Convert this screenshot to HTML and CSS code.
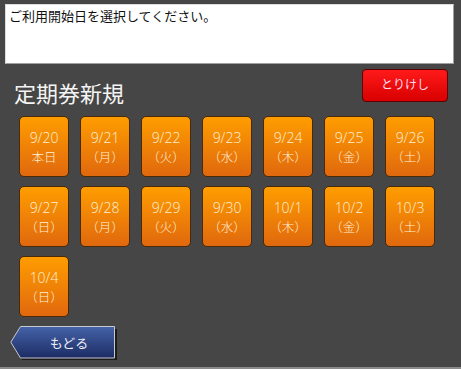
FILE: index.html
```html
<!DOCTYPE html>
<html lang="ja">
<head>
  <meta charset="UTF-8" />
  <title>定期券新規</title>
  <link rel="stylesheet" href="styles.css">
</head>
<body>
  <div id="gamen">
    <div id="message">ご利用開始日を選択してください。</div>

    <div id="header">
      <div class="midashi">定期券新規</div>
      <button class="torikeshi">とりけし</button>
    </div>

    <div id="hiduke">
      <button class="hi"><span>9/20</span><span>本日</span></button>
      <button class="hi"><span>9/21</span><span>（月）</span></button>
      <button class="hi"><span>9/22</span><span>（火）</span></button>
      <button class="hi"><span>9/23</span><span>（水）</span></button>
      <button class="hi"><span>9/24</span><span>（木）</span></button>
      <button class="hi"><span>9/25</span><span>（金）</span></button>
      <button class="hi"><span>9/26</span><span>（土）</span></button>
      <button class="hi"><span>9/27</span><span>（日）</span></button>
      <button class="hi"><span>9/28</span><span>（月）</span></button>
      <button class="hi"><span>9/29</span><span>（火）</span></button>
      <button class="hi"><span>9/30</span><span>（水）</span></button>
      <button class="hi"><span>10/1</span><span>（木）</span></button>
      <button class="hi"><span>10/2</span><span>（金）</span></button>
      <button class="hi"><span>10/3</span><span>（土）</span></button>
      <button class="hi"><span>10/4</span><span>（日）</span></button>
    </div>

    <button class="modoru">
      <svg class="modoru-bg" width="108" height="36" viewBox="0 0 108 36">
        <defs>
          <linearGradient id="ao" x1="0" y1="0" x2="0" y2="1">
            <stop offset="0" stop-color="#4563a8" />
            <stop offset="1" stop-color="#1c2c64" />
          </linearGradient>
        </defs>
        <polygon points="12,3 107,3 107,34 12,34 2,18.5" fill="#111" opacity="0.8" />
        <polygon points="10.5,0.5 104.5,0.5 104.5,32 10.5,32 0.8,16.2" fill="url(#ao)" stroke="#c8c8d0" stroke-width="1" />
      </svg>
      <span>もどる</span>
    </button>
  </div>
</body>
</html>
```

FILE: styles.css
```css
body {
  margin: 0;
  background-color: #464646;
  font-family: "Noto Sans CJK JP", sans-serif;
}

#gamen {
  width: 461px;
  height: 367px;
  border-bottom: 2px solid #8a8a8a;
  display: flex;
  flex-direction: column;
}

#message {
  margin: 4px 7px 0 5px;
  height: 54px;
  background: #fff;
  border: 1px solid #a0a0a0;
  border-left-color: #ddd;
  border-top-color: #ddd;
  padding: 2px 3px;
  font-size: 13px;
  line-height: 18px;
  color: #111;
}

#header {
  display: flex;
  justify-content: space-between;
  align-items: flex-end;
  margin-top: 5px;
  padding: 0 13px 0 14px;
}

.midashi {
  color: #f4f4f4;
  font-size: 22px;
  line-height: 26px;
  margin-bottom: -3px;
}

.torikeshi {
  width: 86px;
  height: 33px;
  border: 1px solid #5a0000;
  border-radius: 4px;
  background: linear-gradient(#ff1a1a, #d80000);
  color: #fde;
  font-family: "Noto Sans CJK JP", sans-serif;
  font-size: 12px;
  padding: 0 0 5px 0;
}

#hiduke {
  display: grid;
  grid-template-columns: repeat(7, 50px);
  column-gap: 11px;
  row-gap: 9px;
  margin-top: 14px;
  padding-left: 19px;
}

.hi {
  height: 61px;
  border: 1px solid #4a2a08;
  border-radius: 5px;
  background: linear-gradient(#ff9d00, #e0680e);
  color: #fff0d6;
  font-family: "Open Sans", "Noto Sans CJK JP", sans-serif;
  font-weight: 300;
  font-size: 14px;
  line-height: 19px;
  padding: 1px 0 0 0;
  display: flex;
  flex-direction: column;
  align-items: center;
  justify-content: center;
}

.hi span {
  display: block;
  height: 19px;
}

.hi span:last-child {
  font-family: "Noto Sans CJK JP", sans-serif;
  font-size: 12.5px;
}

.modoru {
  position: relative;
  width: 108px;
  height: 36px;
  margin: 9px 0 0 10px;
  padding: 0 0 4px 10px;
  border: none;
  background: none;
  color: #f0f0f8;
  font-family: "Noto Sans CJK JP", sans-serif;
  font-size: 13px;
  text-align: center;
}

.modoru-bg {
  position: absolute;
  left: 0;
  top: 0;
}

.modoru span {
  position: relative;
}
```
